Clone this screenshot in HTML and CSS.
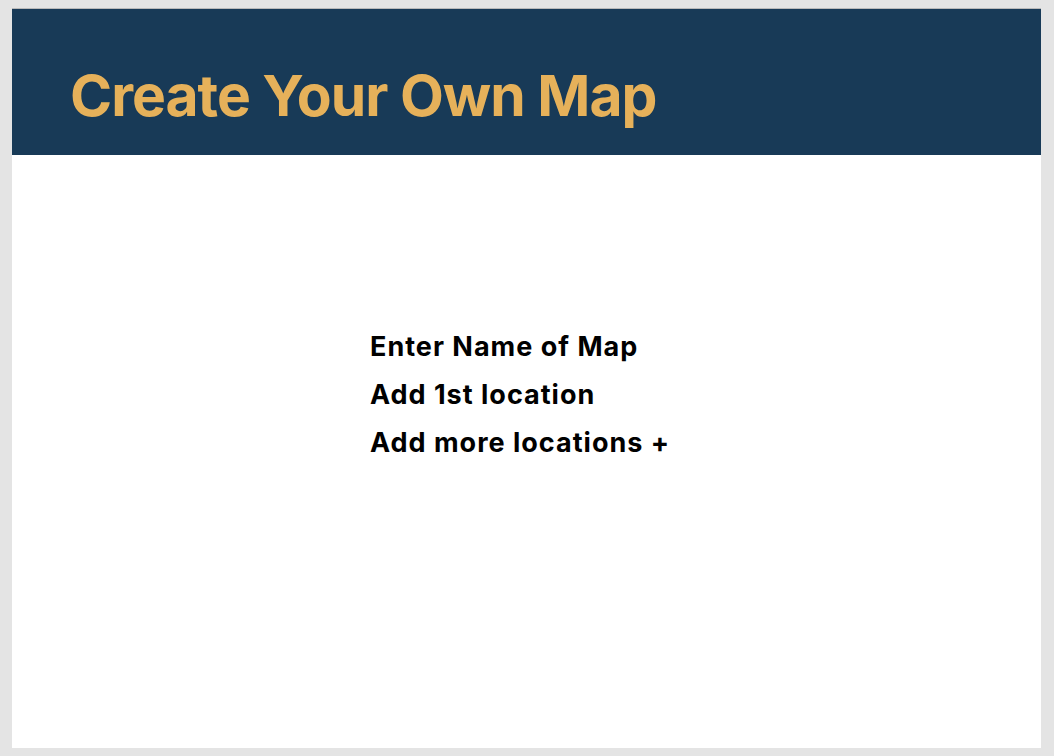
FILE: index.html
```html
<!DOCTYPE html>
<html lang="en">
<head>
<meta charset="utf-8">
<title>Create Your Own Map</title>
<link rel="stylesheet" href="styles.css">
</head>
<body>
<div class="page">
  <header class="banner">
    <h1 class="title">Create Your Own Map</h1>
  </header>
  <main class="content">
    <ul class="steps">
      <li>Enter Name of Map</li>
      <li>Add 1st location</li>
      <li>Add more locations +</li>
    </ul>
  </main>
</div>
</body>
</html>
```

FILE: styles.css
```css
html, body {
  margin: 0;
  padding: 0;
}
body {
  background: #e4e4e4;
  font-family: Inter, "Noto Sans", sans-serif;
  height: 756px;
  overflow: hidden;
}
.page {
  margin: 8px 0 0 12px;
  width: 1029px;
  height: 740px;
  background: #ffffff;
  border-top: 1px solid #b9b9b9;
  box-sizing: border-box;
  display: flex;
  flex-direction: column;
}
.banner {
  background: #183a57;
  height: 146px;
  box-sizing: border-box;
  padding: 52px 0 0 58px;
}
.title {
  margin: 0;
  color: #e6b15a;
  font-size: 57px;
  font-weight: 700;
  line-height: normal;
  letter-spacing: -1px;
}
.content {
  flex: 1;
  padding: 168px 0 0 358px;
}
.steps {
  list-style: none;
  margin: 0;
  padding: 0;
}
.steps li {
  font-size: 27px;
  font-weight: 700;
  color: #000;
  line-height: 48px;
  letter-spacing: 1px;
}
```
